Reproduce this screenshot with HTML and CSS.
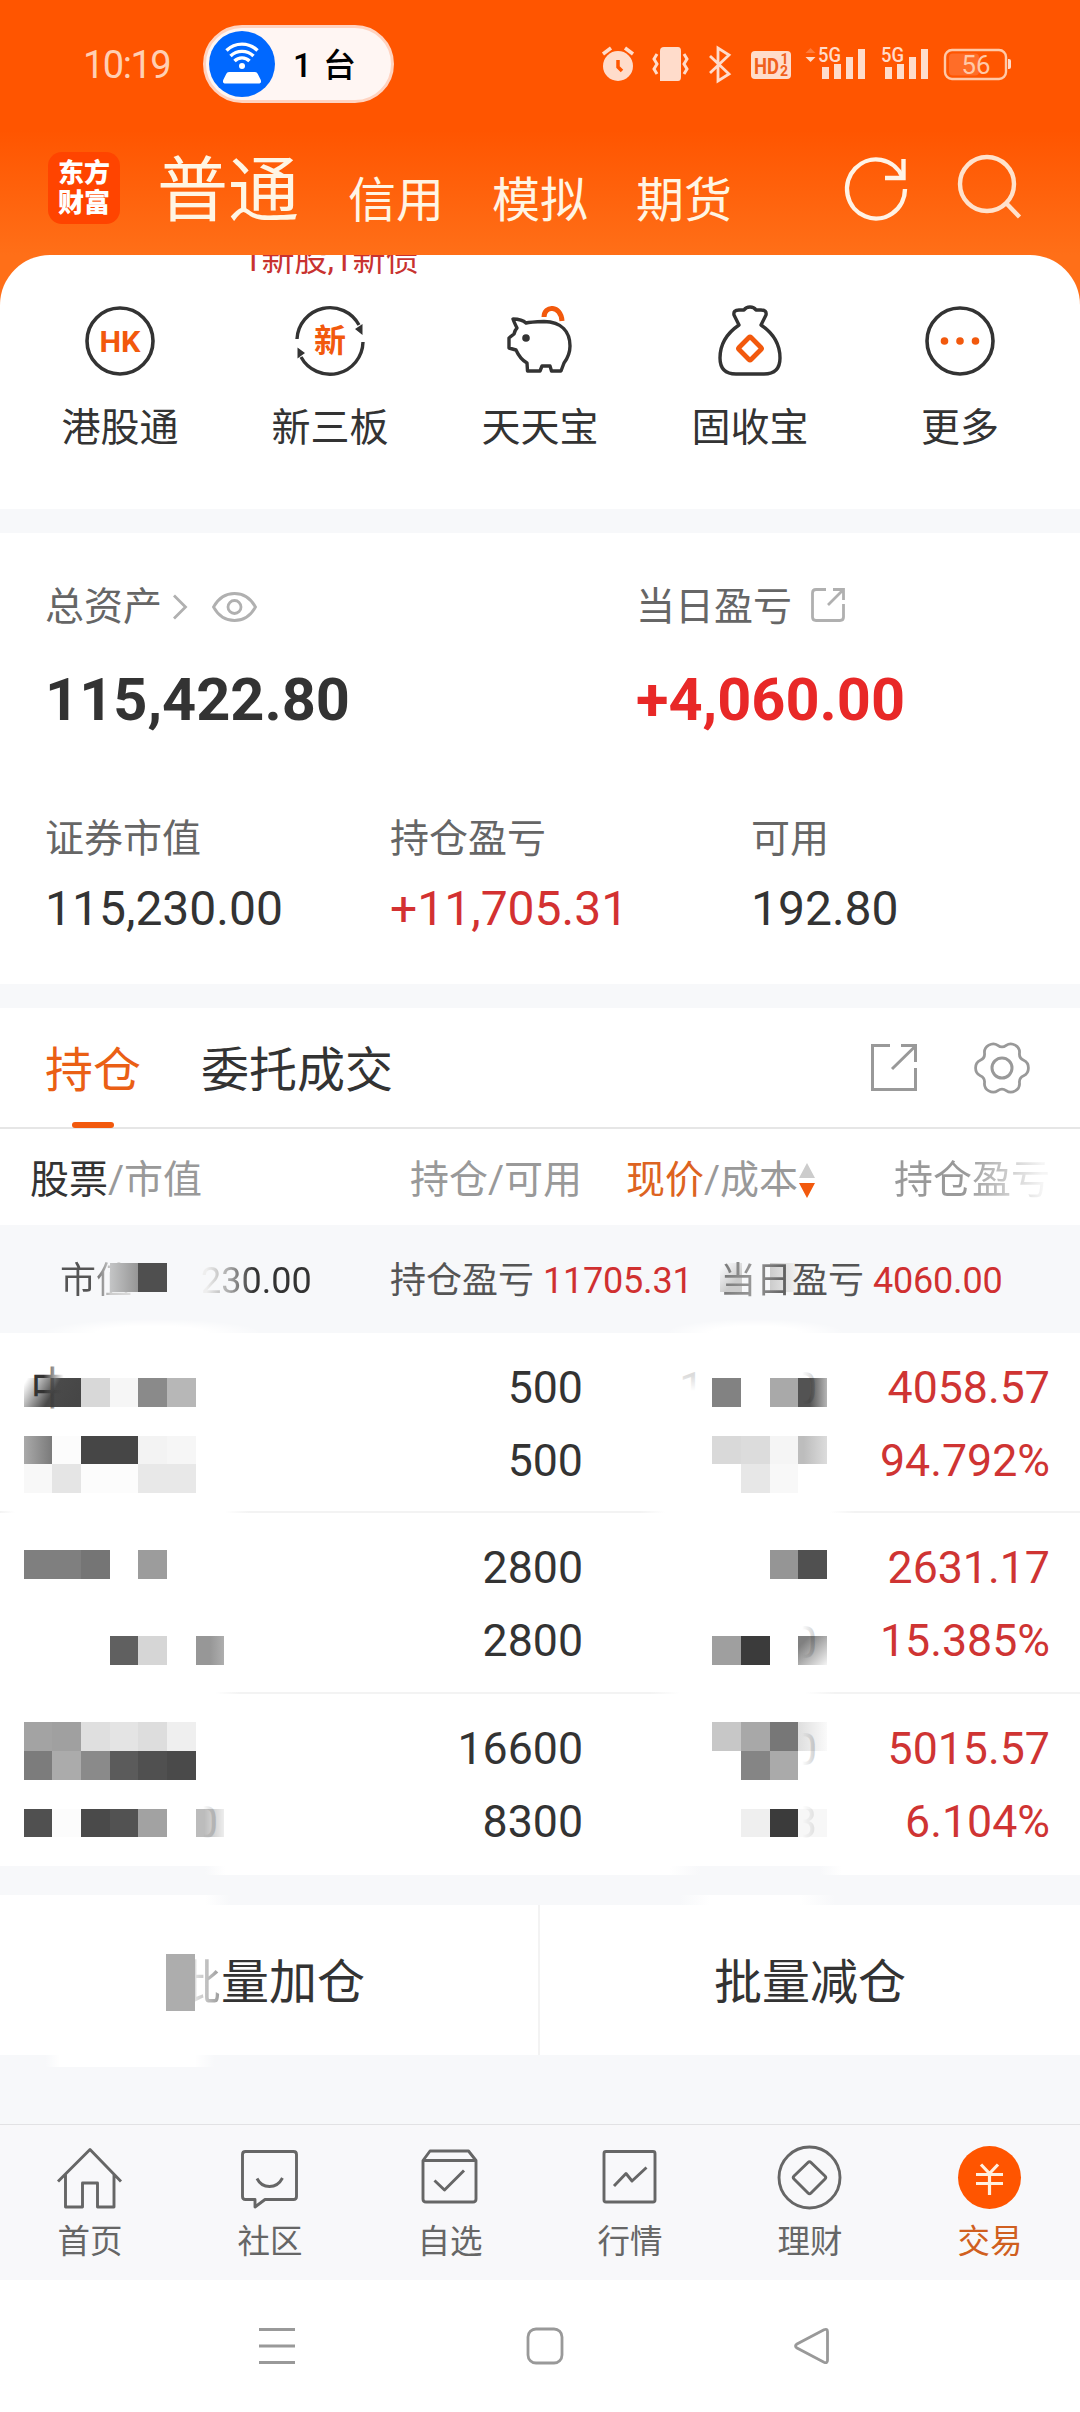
FILE: index.html
```html
<!DOCTYPE html>
<html lang="zh-CN">
<head>
<meta charset="utf-8">
<title>东方财富 - 交易</title>
<link rel="stylesheet" href="styles.css">
</head>
<body>
<div class="app">
  <header class="top">
    <div class="status">
      <span class="clock">10:19</span>
      <div class="pill">
        <svg class="pill-icon" width="66" height="66" viewBox="0 0 66 66">
          <circle cx="33" cy="33" r="33" fill="#0068ff"/>
          <g fill="none" stroke="#fff" stroke-width="3.4">
            <path d="M17.500 19.500a22 22 0 0 1 31 0"/>
            <path d="M21.500 25a16.500 16.500 0 0 1 23 0"/>
            <path d="M25.500 30a10.500 10.500 0 0 1 15 0"/>
          </g>
          <circle cx="33" cy="35" r="3" fill="#fff"/>
          <path d="M20 41h26q2 0 2.800 2l3 6q1 3.500-2.500 3.500H16.700q-3.500 0-2.500-3.500l3-6q.8-2 2.800-2z" fill="#fff"/>
        </svg>
        <span class="pill-text">1 台</span>
      </div>
      <svg class="status-icons" width="412" height="40" viewBox="601 44 412 40">
        <g fill="#ffdccb">
          <circle cx="618" cy="66" r="15"/>
          <path d="M603 54l8-6M633 54l-8-6" stroke="#ffdccb" stroke-width="3.500"/>
          <path d="M618 60v7l4 4" fill="none" stroke="#ff5500" stroke-width="3.500"/>
          <path d="M664 47h14q3 0 3 4v26q0 4-3 4h-18V51q0-4 4-4z"/>
          <path d="M657 54l-3 5 3 5-3 5 3 5M684 54l3 5-3 5 3 5-3 5" fill="none" stroke="#ffdccb" stroke-width="3"/>
          <path d="M710 56l19 18-11 7V48l11 7-19 18" fill="none" stroke="#ffdccb" stroke-width="2.800"/>
          <rect x="751" y="51" width="40" height="28" rx="4"/>
          <path d="M805.500 57h10l-5 5z"/>
          <path d="M805.500 53h10l-5-5z" fill="#ff7a3a"/>
          <path d="M822 67h7v12h-7zM834 64h7v15h-7zM846 57h7v22h-7zM858 49h7v30h-7z"/>
          <path d="M885 67h7v12h-7zM897 64h7v15h-7zM909 57h7v22h-7zM921 49h7v30h-7z"/>
          <text x="818" y="62" class="net" textLength="23" lengthAdjust="spacingAndGlyphs">5G</text>
          <text x="881" y="62" class="net" textLength="23" lengthAdjust="spacingAndGlyphs">5G</text>
          <path d="M1008 59h1q2 0 2 2v6q0 2-2 2h-1z"/>
        </g>
        <text x="754" y="73.500" class="hd" textLength="25" lengthAdjust="spacingAndGlyphs">HD</text>
        <text x="780.500" y="64" class="hd-s">1</text>
        <text x="780" y="76" class="hd-s">2</text>
        <rect x="949" y="53.500" width="30" height="22" rx="4" fill="#ff6d28"/>
        <rect x="945" y="50" width="61" height="29" rx="7" fill="none" stroke="#ffc9a8" stroke-width="2.400"/>
        <text x="961.500" y="74" class="batt" textLength="29" lengthAdjust="spacingAndGlyphs">56</text>
      </svg>
    </div>
    <nav class="accounts">
      <div class="logo"><span>东方</span><span>财富</span></div>
      <span class="acct acct-on">普通</span>
      <span class="acct">信用</span>
      <span class="acct">模拟</span>
      <span class="acct">期货</span>
      <svg class="tools" width="184" height="72" viewBox="840 153 184 72">
        <path d="M902.500 178A29 29.500 0 1 0 905 190" fill="none" stroke="#fff3e6" stroke-width="4.400"/>
        <path d="M903.500 160v19H885" fill="none" stroke="#fff3e6" stroke-width="4.400"/>
        <g fill="none" stroke="#ffe2cc" stroke-width="4.400"><circle cx="987" cy="185" r="27"/><path d="M1006 204l13.500 14"/></g>
      </svg>
    </nav>
  </header>

  <section class="sheet">
    <div class="notice">1新股,1新债</div>
    <div class="shortcuts">
      <div class="shortcut">
        <svg width="76" height="76" viewBox="-38 -38 76 76"><circle r="33" fill="none" stroke="#333" stroke-width="3.600"/><text y="11" text-anchor="middle" class="hk" textLength="41" lengthAdjust="spacingAndGlyphs">HK</text></svg>
        <span>港股通</span>
      </div>
      <div class="shortcut">
        <svg width="76" height="76" viewBox="-38 -38 76 76"><g fill="none" stroke="#333" stroke-width="3.400"><path d="M-33-2A33 33 0 0 1 29-16"/><path d="M33 1A33 33 0 0 1-29 16"/></g><path d="M25-12l7.500-5v11zM-25 12l-7.500-5.500v11z" fill="#333"/><text y="11" text-anchor="middle" class="xin">新</text></svg>
        <span>新三板</span>
      </div>
      <div class="shortcut">
        <svg width="76" height="76" viewBox="-38 -38 76 76"><path d="M4-24C4-36 21-36 22-20" fill="none" stroke="#f2590d" stroke-width="5"/><path d="M-27-22Q-18-22-14-18Q-10-19 4-19.500C22-19 30-9 30 5C30 13 27 18 24 22L21 30H11.500L10 25H2L0 30H-12.500L-13 22Q-20 18-24 9L-31 7V-3L-26-7Q-25-11-23-13Q-26-19-27-22Z" fill="#fff" stroke="#333" stroke-width="3.400" stroke-linejoin="round"/><circle cx="-14" cy="-3" r="3.800" fill="#333"/></svg>
        <span>天天宝</span>
      </div>
      <div class="shortcut">
        <svg width="76" height="76" viewBox="-38 -38 76 76"><path d="M-11-16L-16-26Q-17-31-11-31Q-8-31-6-31Q-4-34 0-34Q4-34 6-31Q8-31 11-31Q17-31 16-26L11-16Q30-3 30 17Q30 33 14 33H-14Q-30 33-30 17Q-30-3-11-16Z" fill="none" stroke="#333" stroke-width="3.400" stroke-linejoin="round"/><rect x="-8.500" y="-8.500" width="17" height="17" rx="1.500" transform="translate(0 7.500) rotate(45)" fill="none" stroke="#f2590d" stroke-width="4.800"/></svg>
        <span>固收宝</span>
      </div>
      <div class="shortcut">
        <svg width="76" height="76" viewBox="-38 -38 76 76"><circle r="33" fill="none" stroke="#333" stroke-width="3.600"/><g fill="#f2590d"><circle cx="-15.500" r="3.800"/><circle r="3.800"/><circle cx="15.500" r="3.800"/></g></svg>
        <span>更多</span>
      </div>
    </div>
  </section>

  <section class="assets">
    <div class="asset-main">
      <div class="asset">
        <div class="label">总资产
          <svg class="eye" width="86" height="36" viewBox="172 588 86 36"><g fill="none" stroke="#b0b0b0" stroke-width="2.800"><path d="M174 594.500l11.500 11.500-11.500 11.500"/><path d="M213.500 606Q221 592.500 234.500 592.500T255.500 606Q248 619.500 234.500 619.500T213.500 606Z"/><circle cx="234.500" cy="606" r="6.500"/></g></svg>
        </div>
        <div class="big">115,422.80</div>
      </div>
      <div class="asset">
        <div class="label">当日盈亏
          <svg class="share-s" width="36" height="38" viewBox="810 587 36 38"><path d="M826 589.500H816q-3.500 0-3.500 3.500v24q0 3.500 3.500 3.500h24q3.500 0 3.500-3.500V604M833 589.500h10.500V600M843 590l-15 15" fill="none" stroke="#b0b0b0" stroke-width="2.800"/></svg>
        </div>
        <div class="big up">+4,060.00</div>
      </div>
    </div>
    <div class="asset-sub">
      <div><div class="label">证券市值</div><div class="mid">115,230.00</div></div>
      <div><div class="label">持仓盈亏</div><div class="mid red">+11,705.31</div></div>
      <div><div class="label">可用</div><div class="mid">192.80</div></div>
    </div>
  </section>

  <section class="tabs">
    <span class="tab tab-on">持仓</span>
    <span class="tab">委托成交</span>
    <svg class="tab-tools" width="164" height="60" viewBox="868 1039 164 60">
      <path d="M890 1046.500H872.500V1090.500H915.500V1069M901 1046.500H915.500V1063M915 1047.500L892 1070" fill="none" stroke="#999" stroke-width="3"/>
      <g transform="translate(1002 1069)" fill="none" stroke="#999" stroke-width="3"><path transform="scale(.93)" d="M28.400 0Q28.400 6 23.300 8.300Q18.200 10.500 18.800 16Q19.400 21.600 14.200 24.600Q9 27.600 4.500 24.300Q0 21-4.500 24.300Q-9 27.600-14.200 24.600Q-19.400 21.600-18.800 16Q-18.200 10.500-23.300 8.300Q-28.400 6-28.400 0Q-28.400-6-23.300-8.300Q-18.200-10.500-18.800-16Q-19.400-21.600-14.200-24.600Q-9-27.600-4.500-24.300Q0-21 4.500-24.300Q9-27.600 14.200-24.600Q19.400-21.600 18.800-16Q18.200-10.500 23.300-8.300Q28.400-6 28.400 0Z"/><circle r="10"/></g>
    </svg>
  </section>

  <section class="positions">
    <div class="thead">
      <span class="th-stock"><b>股票</b>/市值</span>
      <span class="th-qty">持仓/可用</span>
      <span class="th-price"><em>现价</em>/成本<svg width="18" height="38" viewBox="0 0 18 38"><path d="M9 1l8 15H1z" fill="#ccc"/><path d="M9 36l8-15H1z" fill="#f2590d"/></svg></span>
      <span class="th-gain">持仓盈亏</span>
    </div>
    <div class="sum">
      <span class="sum-value"><i class="fade-r">市值</i><svg width="58" height="30" viewBox="0 0 58 30"><defs><linearGradient id="s1"><stop offset="0" stop-color="#c4c5c6"/><stop offset="1" stop-color="#949494"/></linearGradient></defs><path d="M0 0h29v29H0z" fill="url(#s1)"/><path d="M28 0h29v29H28z" fill="#4f4f4f"/></svg><i class="fade-l">230.00</i></span>
      <span class="sum-gain">持仓盈亏 <strong>11705.31</strong></span>
      <span class="sum-day"><i class="ghost">当日</i>盈亏 <strong>4060.00</strong></span>
    </div>

    <div class="row row-1">
      <svg width="250" height="180" viewBox="0 1333 250 180">
        <defs>
          <linearGradient id="a1" x1="0" y1="0.200" x2="1" y2="0.500"><stop offset="0" stop-color="#fff"/><stop offset=".55" stop-color="#4a4a4a"/><stop offset="1" stop-color="#464646"/></linearGradient>
          <linearGradient id="a2"><stop offset="0" stop-color="#aaa"/><stop offset="1" stop-color="#7a7a7a"/></linearGradient>
          <linearGradient id="a3"><stop offset=".3" stop-color="#333"/><stop offset=".75" stop-color="#444" stop-opacity="0"/></linearGradient>
        </defs>
        <path d="M24 1378h57v29H24z" fill="url(#a1)"/>
        <path d="M81 1378h29v29H81z" fill="#d8d8d8"/><path d="M110 1378h28v29h-28z" fill="#f6f6f6"/><path d="M138 1378h29v29h-29z" fill="#8a8a8a"/><path d="M167 1378h29v29h-29z" fill="#b7b7b7"/>
        <text x="30" y="1405" class="ghost-cjk" fill="url(#a3)">中</text>
        <path d="M24 1436h28v28H24z" fill="url(#a2)"/><path d="M52 1436h29v28H52z" fill="#fcfcfc"/><path d="M81 1436h57v28H81z" fill="#464646"/><path d="M138 1436h29v28h-29z" fill="#f3f3f3"/><path d="M167 1436h29v28h-29z" fill="#f6f6f6"/>
        <path d="M24 1464h28v29H24z" fill="#f8f8f8"/><path d="M52 1464h29v29H52z" fill="#e5e5e5"/><path d="M81 1464h57v29H81z" fill="#fcfcfc"/><path d="M138 1464h58v29h-58z" fill="#e8e8e8"/>
      </svg>
      <div class="qty"><span>500</span><span>500</span></div>
      <svg width="257" height="180" viewBox="583 1333 257 180">
        <defs>
          <linearGradient id="b1"><stop offset=".4" stop-color="#535353"/><stop offset="1" stop-color="#b5b5b5"/></linearGradient>
          <linearGradient id="b2"><stop offset=".2" stop-color="#bdbdbd"/><stop offset="1" stop-color="#dcdcdc"/></linearGradient>
          <linearGradient id="fadeUp" x1="0" y1="0" x2="0" y2="1"><stop offset=".25" stop-color="#000" stop-opacity=".14"/><stop offset=".55" stop-color="#000" stop-opacity="0"/></linearGradient>
          <linearGradient id="fadeLeft"><stop offset=".4" stop-color="#000" stop-opacity="0"/><stop offset=".9" stop-color="#000" stop-opacity=".18"/></linearGradient>
        </defs>
        <path d="M712 1378h29v29h-29z" fill="#828282"/><path d="M770 1378h28v29h-28z" fill="#a9a9a9"/><path d="M798 1378h29v29h-29z" fill="url(#b1)"/>
        <text x="679" y="1404" class="ghost-num" fill="url(#fadeUp)">1</text><text x="792" y="1404" class="ghost-num" fill="url(#fadeLeft)">0</text>
        <path d="M712 1436h29v28h-29z" fill="#d9d9d9"/><path d="M741 1436h29v28h-29z" fill="#dcdcdc"/><path d="M770 1436h28v28h-28z" fill="#f5f5f5"/><path d="M798 1436h29v28h-29z" fill="url(#b2)"/>
        <path d="M741 1464h29v29h-29z" fill="#e7e7e7"/><path d="M770 1464h28v29h-28z" fill="#f8f8f8"/>
      </svg>
      <div class="gain"><span>4058.57</span><span>94.792%</span></div>
    </div>

    <div class="row row-2">
      <svg width="250" height="181" viewBox="0 1513 250 181">
        <defs><linearGradient id="d1"><stop offset=".5" stop-color="#979797"/><stop offset="1" stop-color="#aeaeae"/></linearGradient></defs>
        <path d="M24 1550h57v29H24z" fill="#7f7f7f"/><path d="M81 1550h29v29H81z" fill="#757575"/><path d="M138 1550h29v29h-29z" fill="#9c9c9c"/>
        <path d="M110 1636h28v29h-28z" fill="#606060"/><path d="M138 1636h29v29h-29z" fill="#d6d6d6"/><path d="M196 1636h28v29h-28z" fill="url(#d1)"/>
      </svg>
      <div class="qty"><span>2800</span><span>2800</span></div>
      <svg width="257" height="181" viewBox="583 1513 257 181">
        <defs><linearGradient id="e1" x1="0" y1="0" x2="1" y2="1"><stop offset=".2" stop-color="#808080"/><stop offset="1" stop-color="#f5f5f5"/></linearGradient></defs>
        <path d="M770 1550h28v29h-28z" fill="#959595"/><path d="M798 1550h29v29h-29z" fill="#505050"/>
        <path d="M712 1636h29v29h-29z" fill="#9f9f9f"/><path d="M741 1636h29v29h-29z" fill="#3b3b3b"/><path d="M798 1636h29v29h-29z" fill="url(#e1)"/>
        <text x="792" y="1658" class="ghost-num" fill="url(#fadeLeft)">0</text>
      </svg>
      <div class="gain"><span>2631.17</span><span>15.385%</span></div>
    </div>

    <div class="row row-3">
      <svg width="250" height="181" viewBox="0 1694 250 181">
        <defs><linearGradient id="f1"><stop offset=".3" stop-color="#bcbcbc"/><stop offset="1" stop-color="#ededed"/></linearGradient></defs>
        <path d="M24 1722h28v29H24z" fill="#a3a3a3"/><path d="M52 1722h29v29H52z" fill="#a0a0a0"/><path d="M81 1722h29v29H81z" fill="#dfdfdf"/><path d="M110 1722h28v29h-28z" fill="#e4e4e4"/><path d="M138 1722h29v29h-29z" fill="#ddd"/><path d="M167 1722h29v29h-29z" fill="#efefef"/>
        <path d="M24 1751h28v29H24z" fill="#7c7c7c"/><path d="M52 1751h29v29H52z" fill="#ababab"/><path d="M81 1751h29v29H81z" fill="#8a8a8a"/><path d="M110 1751h28v29h-28z" fill="#5b5b5b"/><path d="M138 1751h29v29h-29z" fill="#505050"/><path d="M167 1751h29v29h-29z" fill="#4a4a4a"/>
        <path d="M24 1809h28v28H24z" fill="#505050"/><path d="M52 1809h29v28H52z" fill="#fcfcfc"/><path d="M81 1809h29v28H81z" fill="#4a4a4a"/><path d="M110 1809h28v28h-28z" fill="#525252"/><path d="M138 1809h29v28h-29z" fill="#a2a2a2"/><path d="M196 1809h28v28h-28z" fill="url(#f1)"/>
        <text x="193" y="1838" class="ghost-num" fill="url(#fadeLeft)">0</text>
      </svg>
      <div class="qty"><span>16600</span><span>8300</span></div>
      <svg width="257" height="181" viewBox="583 1694 257 181">
        <defs><linearGradient id="g1"><stop offset="0" stop-color="#dedede"/><stop offset="1" stop-color="#fafafa"/></linearGradient></defs>
        <path d="M712 1722h29v29h-29z" fill="#c7c7c7"/><path d="M741 1722h29v29h-29z" fill="#a8a8a8"/><path d="M798 1722h29v29h-29z" fill="url(#g1)"/>
        <path d="M741 1809h29v28h-29z" fill="#efefef"/><path d="M798 1809h29v28h-29z" fill="#f7f7f7"/>
        <text x="792" y="1765" class="ghost-num" fill="url(#fadeLeft)">0</text><text x="792" y="1838" class="ghost-num" fill="url(#fadeLeft)" opacity=".5">3</text>
        <path d="M770 1722h28v29h-28z" fill="#777"/><path d="M741 1751h29v29h-29z" fill="#858585"/><path d="M770 1751h28v29h-28z" fill="#aaa"/><path d="M770 1809h28v28h-28z" fill="#3b3b3b"/>
      </svg>
      <div class="gain"><span>5015.57</span><span>6.104%</span></div>
    </div>
  </section>

  <div class="gap-band"></div>

  <section class="batch">
    <div class="batch-btn"><span class="covered">批</span>量加仓</div>
    <div class="batch-btn">批量减仓</div>
  </section>

  <div class="spacer"></div>

  <nav class="tabbar">
    <div class="item"><svg width="72" height="70" viewBox="54 2142 72 70"><path d="M58 2181.500L90 2149.500l31 32M65.500 2174V2207H82.500V2183H97.500V2207H114V2174" /></svg><span>首页</span></div>
    <div class="item"><svg width="72" height="70" viewBox="234 2142 72 70"><path d="M245 2151.500H293.500q3 0 3 3V2196.500q0 3-3 3H265L255 2207V2199.500H245.500q-3 0-3-3V2154.500q0-3 3-3ZM257 2178.500Q261 2186.500 269.500 2186.500T282.500 2178"/></svg><span>社区</span></div>
    <div class="item"><svg width="72" height="70" viewBox="414 2142 72 70"><path d="M423 2160.500L430 2151H468.500L476 2160.500V2199q0 3-3 3H426q-3 0-3-3ZM423 2160.500H476M434.500 2180.500L444.500 2190L464 2170.500"/></svg><span>自选</span></div>
    <div class="item"><svg width="72" height="70" viewBox="594 2142 72 70"><rect x="604" y="2151.500" width="51" height="50.500" rx="2"/><path d="M614 2186L626 2173.500L632 2181L646.500 2167.500"/></svg><span>行情</span></div>
    <div class="item"><svg width="72" height="70" viewBox="774 2142 72 70"><circle cx="809.500" cy="2177.500" r="30.500"/><path d="M808 2162.500q1.500-1.500 3 0l14 13.500q1.500 1.500 0 3l-14 14q-1.500 1.500-3 0l-14-14q-1.500-1.500 0-3z"/></svg><span>理财</span></div>
    <div class="item item-on"><svg width="72" height="70" viewBox="954 2142 72 70"><circle class="disc" cx="989.500" cy="2177.500" r="31.500"/><path class="yen" d="M981 2164.500L989.500 2173.500L998 2164.500M989.500 2173.500V2195M976 2174.500H1003M976 2183.500H1003"/></svg><span>交易</span></div>
  </nav>

  <nav class="sysnav">
    <svg width="40" height="40" viewBox="0 0 40 40"><path d="M2 3.500h36M2 20h36M2 36.500h36"/></svg>
    <svg width="40" height="40" viewBox="0 0 40 40"><rect x="3" y="3" width="34" height="34" rx="8"/></svg>
    <svg width="40" height="40" viewBox="0 0 40 40"><path d="M31 3.800L4 18q-3 2 0 4L31 36.200q3.500 1.500 3.500-2V5.800q0-3.500-3.500-2z"/></svg>
  </nav>
</div>
</body>
</html>
```
FILE: styles.css
```css
* { box-sizing: border-box; }
body { margin: 0; background: #fff; }
svg { display: block; flex: none; }
i, em { font-style: normal; }

.app {
  width: 1080px;
  height: 2412px;
  overflow: hidden;
  display: flex;
  flex-direction: column;
  background: linear-gradient(#ff5500 130px, #ff6f18 255px, #ff6f18 320px, #fff 320px);
  font-family: Roboto, "Noto Sans CJK SC", sans-serif;
  color: #333;
  font-weight: 400;
}

/* header */
.top { height: 255px; flex: none; }
.status { display: flex; align-items: center; height: 128px; padding-left: 83px; }
.clock { width: 120px; font-size: 38px; letter-spacing: -1.500px; color: #ffcfb3; line-height: 40px; padding-top: 2px; }
.pill { display: flex; align-items: center; width: 191px; height: 78px; border: 3px solid #ffd3c0; border-radius: 39px; background: #fff6f3; padding-left: 3px; }
.pill-text { margin: -3px 0 0 18px; font-size: 33px; font-weight: 500; color: #000; white-space: pre; word-spacing: 3px; }
.status-icons { margin-left: 207px; }
.net { font: 500 20px Roboto, sans-serif; }
.hd { font: 700 22px Roboto, sans-serif; fill: #f0601c; }
.hd-s { font: 700 14px Roboto, sans-serif; fill: #f0601c; }
.batt { font: 400 26px Roboto, sans-serif; fill: #ffc9a8; }

.accounts { display: flex; align-items: center; height: 120px; padding-left: 48px; color: #fff5e4; }
.logo { width: 72px; height: 72px; border-radius: 14px; background: #ff4400; display: flex; flex-direction: column; align-items: center; justify-content: center; margin-right: 37px; font-size: 26px; line-height: 30px; font-weight: 900; color: #fff; }
.acct { font-size: 48px; line-height: 60px; padding-top: 25px; margin-right: 48px; }
.acct-on { font-size: 71px; line-height: 90px; padding-top: 5px; margin-right: 49px; }
.tools { margin-left: 60px; }

/* shortcuts */
.sheet { height: 254px; flex: none; background: #fff; border-radius: 50px 50px 0 0; overflow: hidden; }
.notice { height: 46px; padding-left: 243px; font-size: 33px; line-height: 40px; margin-top: -15px; color: #c8322f; }
.shortcuts { display: grid; grid-template-columns: repeat(5, 210px); padding: 17px 15px 0; }
.shortcut { display: flex; flex-direction: column; align-items: center; gap: 25px; font-size: 39px; line-height: 48px; }
.hk { font: 700 30px Roboto, sans-serif; fill: #f2590d; }
.xin { font: 700 32px "Noto Sans CJK SC", sans-serif; fill: #f2590d; }

/* assets */
.assets { height: 499px; flex: none; border: solid #f7f8fa; border-width: 24px 0; background: #fff; padding-top: 50px; }
.label { display: flex; align-items: center; gap: 10px; height: 48px; font-size: 39px; line-height: 48px; color: #666; white-space: nowrap; }
.share-s { margin: -2px 0 0 8px; }
.eye { margin-top: -1px; }
.asset-main { display: grid; grid-template-columns: 591px 1fr; padding-left: 45px; }
.big { margin-top: 34px; font-size: 59.500px; line-height: 70px; font-weight: 700; }
.up { color: #e82827; }
.asset-sub { display: grid; grid-template-columns: 345px 361px 1fr; padding: 80px 0 0 45px; }
.mid { margin-top: 18px; font-size: 48px; line-height: 56px; }
.red { color: #d33131; }

/* tabs */
.tabs { height: 121px; flex: none; display: flex; background: #fff; padding-left: 45px; border-bottom: 2px solid #e6e6e6; }
.tab { font-size: 48px; line-height: 126px; height: 119px; margin-right: 60px; position: relative; }
.tab-on { color: #ea5f15; }
.tab-on::after { content: ""; position: absolute; left: 27px; bottom: -1px; width: 42px; height: 6px; border-radius: 3px; background: #f2590d; }
.tab-tools { margin: 30px 48px 0 auto; }

/* positions */
.positions { flex: none; background: #fff; }
.thead { display: grid; grid-template-columns: 250px 302px 44px 268px 1fr; height: 96px; font-size: 39px; line-height: 103px; color: #999; padding-left: 30px; white-space: nowrap; }
.thead b { font-weight: 400; color: #333; }
.thead em { color: #dd6321; }
.th-qty { grid-column: 2; text-align: right; }
.th-price { grid-column: 4; display: flex; align-items: center; height: 103px; }
.th-gain { grid-column: 5; width: 156px; background: linear-gradient(90deg, #999 45%, #f5f5f5 95%); background-clip: text; -webkit-background-clip: text; color: transparent; }
.sum { display: grid; grid-template-columns: 329px 330px 1fr; height: 108px; padding-left: 61px; font-size: 36px; line-height: 112px; color: #555; white-space: nowrap;
  background: radial-gradient(ellipse 110px 14px at 152px 108px, #fff 50%, #fff0), radial-gradient(ellipse 90px 14px at 755px 108px, #fff 50%, #fff0), #f7f8fa; }
.sum strong { font-weight: 400; color: #d03030; letter-spacing: -.2px; }
.sum-value { display: flex; align-items: center; height: 112px; margin-left: -1px; }
.sum-value i { color: transparent; background-clip: text; -webkit-background-clip: text; }
.sum-value svg { margin: 0 33px 6px -22px; }
.fade-r { background-image: linear-gradient(90deg, #555 45%, #ccc 70%, #ddd); }
.fade-l { background-image: linear-gradient(90deg, #eee 5%, #aaa 25%, #333 48%); }
.ghost { color: transparent; background: linear-gradient(90deg, #777, #999 45%, #555) text; -webkit-background-clip: text; }
.sum-day { background: linear-gradient(135deg, #fff0 20%, #ccc 70%) -6px 38px / 28px 29px no-repeat, linear-gradient(90deg, #ccc, #f2f2f2) 50px 38px / 28px 29px no-repeat; }

.row { display: grid; grid-template-columns: 250px 333px 257px 210px; height: 181px; font-size: 44.700px; line-height: 73px; }
.row-1 { height: 180px; background: linear-gradient(90deg, #f3f3f3, #fff 15px, #fff 225px, #f3f3f3 250px, #f3f3f3 640px, #fff 665px, #fff 830px, #f3f3f3 855px) bottom / 100% 2px no-repeat; }
.row-2 { background: linear-gradient(90deg, #fff 215px, #f3f3f3 240px, #f3f3f3 650px, #fff 680px, #fff 805px, #f3f3f3 835px) bottom / 100% 2px no-repeat; }
.row-3 { background: linear-gradient(90deg, #f7f8fa 205px, #fff 225px, #fff 670px, #f7f8fa 700px, #f7f8fa 820px, #fff 842px) bottom / 100% 9px no-repeat; }
.qty, .gain { display: flex; flex-direction: column; align-items: flex-end; padding-top: 19px; }
.gain { color: #cf3433; }
.ghost-cjk { font: 400 45px "Noto Sans CJK SC", sans-serif; }
.ghost-num { font: 400 45px Roboto, sans-serif; }

/* batch actions */
.gap-band { height: 30px; flex: none; background: linear-gradient(90deg, #fff 205px, #f7f8fa 230px, #f7f8fa 680px, #fff 710px, #fff 800px, #f7f8fa 835px) bottom / 100% 10px no-repeat, #f7f8fa; }
.batch { display: grid; grid-template-columns: 540px 540px; height: 150px; flex: none; background: #fff; }
.batch-btn { text-align: center; font-size: 48px; line-height: 155px; }
.batch-btn:first-child { border-right: 2px solid #f3f3f3; }
.covered { color: transparent; background: linear-gradient(#adadad, #adadad) 0 44% / 29px 57px no-repeat border-box, linear-gradient(90deg, #ddd 55%, #999) text; padding-left: 7px; margin-left: -7px; }
.spacer { height: 69px; flex: none; background: linear-gradient(90deg, #fff0 45px, #fff 60px, #fff 195px, #fff0 215px) top / 100% 12px no-repeat, #f7f8fa; }

/* bottom bars */
.tabbar { display: grid; grid-template-columns: repeat(6, 180px); height: 156px; flex: none; background: #f8f8fa; border-top: 1px solid #e2e2e4; padding-top: 17px; }
.item { display: flex; flex-direction: column; align-items: center; gap: 10px; font-size: 32.500px; line-height: 40px; color: #666; }
.item svg { fill: none; stroke: #666; stroke-width: 2.900; stroke-linejoin: round; }
.item-on { color: #d05f20; }
.item .disc { fill: #ff5500; stroke: none; }
.item .yen { stroke: #fff0df; stroke-width: 3.200; }
.sysnav { display: flex; flex: 1; background: #fff; padding: 46px 0 0 257px; gap: 228px; }
.sysnav svg { fill: none; stroke: #999; stroke-width: 2.800; }
```
